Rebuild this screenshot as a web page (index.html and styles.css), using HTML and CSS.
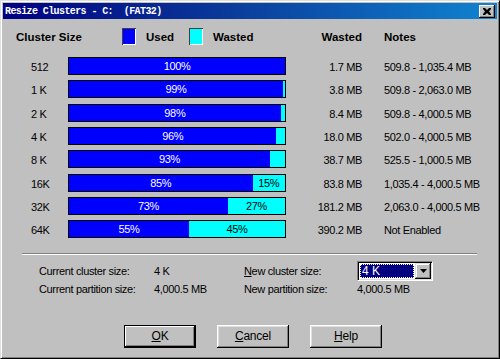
FILE: index.html
```html
<!DOCTYPE html>
<html>
<head>
<meta charset="utf-8">
<link rel="stylesheet" href="styles.css">
</head>
<body>
<div class="window">
  <div class="titlebar">
    <span class="title">Resize Clusters - C:  (FAT32)</span>
    <span class="close"><svg width="8" height="7" viewBox="0 0 8 7"><path d="M0 0h2l2 2 2-2h2v1l-2 2.5 2 2.5v1h-2l-2-2-2 2h-2v-1l2-2.5-2-2.5z" fill="#000"/></svg></span>
  </div>
  <div class="content">
    <div class="header">
      <span class="h-cluster">Cluster Size</span>
      <span class="swatch used-sw"></span>
      <span class="legend legend-used">Used</span>
      <span class="swatch wasted-sw"></span>
      <span class="legend legend-wasted">Wasted</span>
      <span class="h-wasted">Wasted</span>
      <span class="h-notes">Notes</span>
    </div>
    <div class="table">
      <span class="lbl">512</span>
      <div class="bar"><div class="used" style="width:100%">100%</div></div>
      <span class="wasted">1.7 MB</span>
      <span class="notes">509.8 - 1,035.4 MB</span>

      <span class="lbl">1 K</span>
      <div class="bar"><div class="used" style="width:99%">99%</div><div class="free"></div></div>
      <span class="wasted">3.8 MB</span>
      <span class="notes">509.8 - 2,063.0 MB</span>

      <span class="lbl">2 K</span>
      <div class="bar"><div class="used" style="width:98%">98%</div><div class="free"></div></div>
      <span class="wasted">8.4 MB</span>
      <span class="notes">509.8 - 4,000.5 MB</span>

      <span class="lbl">4 K</span>
      <div class="bar"><div class="used" style="width:96%">96%</div><div class="free"></div></div>
      <span class="wasted">18.0 MB</span>
      <span class="notes">502.0 - 4,000.5 MB</span>

      <span class="lbl">8 K</span>
      <div class="bar"><div class="used" style="width:93%">93%</div><div class="free"></div></div>
      <span class="wasted">38.7 MB</span>
      <span class="notes">525.5 - 1,000.5 MB</span>

      <span class="lbl">16K</span>
      <div class="bar"><div class="used" style="width:85%">85%</div><div class="free">15%</div></div>
      <span class="wasted">83.8 MB</span>
      <span class="notes">1,035.4 - 4,000.5 MB</span>

      <span class="lbl">32K</span>
      <div class="bar"><div class="used" style="width:73.5%">73%</div><div class="free">27%</div></div>
      <span class="wasted">181.2 MB</span>
      <span class="notes">2,063.0 - 4,000.5 MB</span>

      <span class="lbl">64K</span>
      <div class="bar"><div class="used" style="width:55.5%">55%</div><div class="free">45%</div></div>
      <span class="wasted">390.2 MB</span>
      <span class="notes">Not Enabled</span>
    </div>
    <div class="sep"></div>
    <div class="info">
      <span>Current cluster size:</span>
      <span>4 K</span>
      <span><u>N</u>ew cluster size:</span>
      <div class="combo"><span class="combo-val"><span class="combo-sel">4 K</span></span><span class="combo-btn"><svg width="7" height="4" viewBox="0 0 7 4"><path d="M0 0h7L3.5 4z" fill="#000"/></svg></span></div>
      <span>Current partition size:</span>
      <span>4,000.5 MB</span>
      <span>New partition size:</span>
      <span>4,000.5 MB</span>
    </div>
    <div class="buttons">
      <button class="btn default"><u>O</u>K</button>
      <button class="btn"><u>C</u>ancel</button>
      <button class="btn"><u>H</u>elp</button>
    </div>
  </div>
</div>
</body>
</html>
```
FILE: styles.css
```css
* { box-sizing: border-box; }
html, body { margin: 0; padding: 0; }
body {
  width: 500px;
  height: 359px;
  overflow: hidden;
  background: #c0c0c0;
  font-family: "Liberation Sans", Arial, sans-serif;
  font-size: 11px;
  letter-spacing: -0.35px;
  color: #000;
}
.window {
  width: 500px;
  height: 359px;
  background: #c0c0c0;
  border: 1px solid;
  border-color: #dfdfdf #000 #000 #dfdfdf;
  box-shadow: inset 1px 1px #fff, inset -1px -1px #808080;
  padding: 2px;
  display: flex;
  flex-direction: column;
}
.titlebar {
  height: 16px;
  flex: none;
  background: linear-gradient(90deg, #000080 0%, #0a3a9a 45%, #1084d0 100%);
  display: flex;
  align-items: center;
  justify-content: space-between;
  padding: 0 2px 0 2px;
  color: #fff;
}
.title {
  font-family: "Liberation Mono", monospace;
  font-size: 10px;
  font-weight: bold;
  letter-spacing: -0.6px;
  white-space: pre;
}
.close {
  width: 16px;
  height: 13px;
  background: #c0c0c0;
  box-shadow: inset -1px -1px #000, inset 1px 1px #fff, inset -2px -2px #808080;
  display: flex;
  align-items: center;
  justify-content: center;
}
.content {
  flex: 1;
  display: flex;
  flex-direction: column;
}
.header {
  display: flex;
  align-items: center;
  height: 17px;
  margin-top: 9px;
  padding-left: 13px;
  font-weight: bold;
  font-size: 11.5px;
  letter-spacing: 0;
}
.h-cluster { width: 106px; }
.swatch {
  width: 14px;
  height: 17px;
  box-shadow: inset 1px 1px #404040, inset -1px -1px #fff;
}
.used-sw { background: #0000ff; }
.wasted-sw { background: #00ffff; }
.legend { margin-left: 10px; }
.legend-used { width: 43px; margin-left: 10px; }
.legend-wasted { width: 104px; }
.h-wasted { width: 45px; text-align: right; }
.h-notes { margin-left: 22px; }

.table {
  display: grid;
  grid-template-columns: 37px 218px 76px 1fr;
  grid-auto-rows: 23.34px;
  margin-top: 12px;
  padding-left: 28px;
}
.table > span {
  height: 18px;
  line-height: 20px;
}
.wasted { text-align: right; }
.notes { padding-left: 22px; }
.bar {
  height: 18px;
  border: 1px solid #000;
  display: flex;
  background: #00ffff;
}
.used {
  background: #0000ff;
  color: #fff;
  display: flex;
  align-items: center;
  justify-content: center;
}
.free {
  flex: 1;
  background: #00ffff;
  color: #000;
  display: flex;
  align-items: center;
  justify-content: center;
}
.sep {
  height: 2px;
  margin: 9px 20px 0 19px;
  border-top: 1px solid #808080;
  border-bottom: 1px solid #fff;
}
.info {
  display: grid;
  grid-template-columns: 115px 90px 113px 1fr;
  grid-template-rows: 19px 17px;
  align-items: center;
  margin-top: 7px;
  padding-left: 36px;
}
.combo {
  width: 76px;
  height: 20px;
  display: flex;
  background: #fff;
  border: 1px solid;
  border-color: #808080 #fff #fff #808080;
  box-shadow: inset 1px 1px #000, inset -1px -1px #dfdfdf;
  padding: 1px;
}
.combo-val {
  flex: 1;
  padding: 1px;
  display: flex;
}
.combo-sel {
  flex: 1;
  background: #000080;
  color: #fff;
  outline: 1px dotted #fff;
  outline-offset: -1px;
  padding-left: 2px;
  line-height: 14px;
  font-size: 12px;
  letter-spacing: 0;
}
.combo-btn {
  width: 16px;
  background: #c0c0c0;
  box-shadow: inset -1px -1px #000, inset 1px 1px #dfdfdf, inset -2px -2px #808080, inset 2px 2px #fff;
  display: flex;
  align-items: center;
  justify-content: center;
}
.buttons {
  display: flex;
  gap: 21px;
  margin-top: 27px;
  padding-left: 121px;
}
.btn {
  width: 72px;
  height: 23px;
  background: #c0c0c0;
  border: none;
  font-family: "Liberation Sans", Arial, sans-serif;
  font-size: 12px;
  letter-spacing: -0.2px;
  color: #000;
  padding: 0;
  box-shadow: inset -1px -1px #000, inset 1px 1px #fff, inset -2px -2px #808080, inset 2px 2px #dfdfdf;
}
.btn.default {
  box-shadow: inset 0 0 0 1px #000, inset -2px -2px #000, inset 2px 2px #fff, inset -3px -3px #808080;
}
```
